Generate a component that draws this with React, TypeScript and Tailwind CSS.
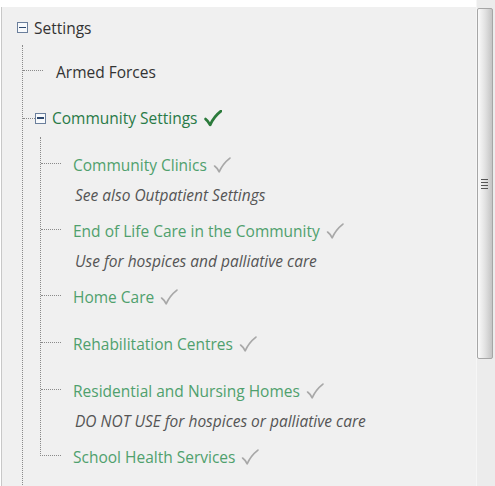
import type { ReactNode } from 'react';

type Child = {
  label: string;
  note?: string;
};

const children: Child[] = [
  { label: 'Community Clinics', note: 'See also Outpatient Settings' },
  { label: 'End of Life Care in the Community', note: 'Use for hospices and palliative care' },
  { label: 'Home Care' },
  { label: 'Rehabilitation Centres' },
  { label: 'Residential and Nursing Homes', note: 'DO NOT USE for hospices or palliative care' },
  { label: 'School Health Services' },
];

const font = { fontFamily: '"Open Sans", "Noto Sans", sans-serif' };

const MinusBox = () => (
  <span className="w-[11px] h-[11px] border border-[#6b7f9c] bg-[#f8fafc] flex items-center justify-center shrink-0">
    <span className="w-[7px] h-[1.5px] bg-[#2f4a70]" />
  </span>
);

const Check = ({ dark }: { dark?: boolean }) => (
  <svg
    width="18"
    height="17"
    viewBox="0 0 17 16"
    className="ml-[6px] shrink-0"
    fill="none"
  >
    <path
      d="M1.5 8.5 C3 9.5 4.5 11.5 5.8 14 C8 9 11.5 4.5 16 1"
      stroke={dark ? '#2b7a3b' : '#a8a8a8'}
      strokeWidth={dark ? 2.6 : 1.6}
      strokeLinecap="round"
      strokeLinejoin="round"
    />
  </svg>
);

const Title = ({ children: content }: { children: ReactNode }) => (
  <div className="h-[36px] flex items-center">{content}</div>
);

const ChildItem = ({ item, last }: { item: Child; last?: boolean }) => (
  <div className={last ? '' : item.note ? '' : 'pb-[11px]'}>
    <Title>
      {last ? (
        <span className="w-[21px] h-[17px] self-start border-l border-b border-dotted border-[#8a8a8a] shrink-0" />
      ) : (
        <span className="w-[20px] h-0 border-t border-dotted border-[#8a8a8a] shrink-0 mb-[4px]" />
      )}
      <span className="ml-[12px] mt-[2px] text-[15.5px] text-[#4fa06d] whitespace-nowrap">{item.label}</span>
      <Check />
    </Title>
    {item.note ? (
      <div className="h-[30px] pl-[34px]">
        <div className="h-[24px] pt-[2px] flex items-center text-[15.5px] italic text-[#555] whitespace-nowrap">
          {item.note}
        </div>
      </div>
    ) : null}
  </div>
);

export default function App() {
  const head = children.slice(0, -1);
  const tail = children[children.length - 1];

  return (
    <div className="w-[495px] h-[486px] flex bg-white overflow-hidden" style={font}>
      <div className="w-[476px] h-full flex flex-col pl-px">
        <div className="h-[7px] shrink-0" />
        <div className="flex-1 bg-[#f0f0f0] border-l border-[#c8c8c8] pt-[5px] overflow-hidden">
          <div className="h-[31px] pl-[15px] flex items-center">
            <MinusBox />
            <span className="ml-[6px] mt-[2px] text-[15.5px] text-[#333]">Settings</span>
          </div>

          <div className="mt-[2px] ml-[20px] border-l border-dotted border-[#8a8a8a] h-[500px]">
            <div className="h-[54px] flex items-center">
              <span className="w-[20px] h-0 border-t border-dotted border-[#8a8a8a] mb-[4px]" />
              <span className="ml-[13px] mt-[2px] text-[15.5px] text-[#333]">Armed Forces</span>
            </div>

            <div className="h-[38px] flex items-center">
              <span className="w-[12px] h-0 border-t border-dotted border-[#8a8a8a]" />
              <MinusBox />
              <span className="ml-[6px] mt-[2px] text-[15.5px] text-[#287a47]">Community Settings</span>
              <Check dark />
            </div>

            <div className="ml-[17px]">
              <div className="border-l border-dotted border-[#8a8a8a] pt-[10px]">
                {head.map((item) => (
                  <ChildItem key={item.label} item={item} />
                ))}
              </div>
              <ChildItem item={tail} last />
            </div>
          </div>
        </div>
      </div>

      <div className="w-[19px] h-full bg-[#ececec] border-l border-[#f6f6f6]">
        <div className="mt-[8px] w-[16px] h-[351px] rounded-[2px] border border-[#a6a6a6] bg-linear-to-r from-[#fafafa] via-[#e2e2e2] to-[#c4c4c4] flex flex-col items-center justify-center gap-[2px]">
          <span className="w-[7px] h-px bg-[#555] mr-[1px]" />
          <span className="w-[7px] h-px bg-[#555] mr-[1px]" />
          <span className="w-[7px] h-px bg-[#555] mr-[1px]" />
          <span className="w-[7px] h-px bg-[#555] mr-[1px]" />
        </div>
      </div>
    </div>
  );
}
